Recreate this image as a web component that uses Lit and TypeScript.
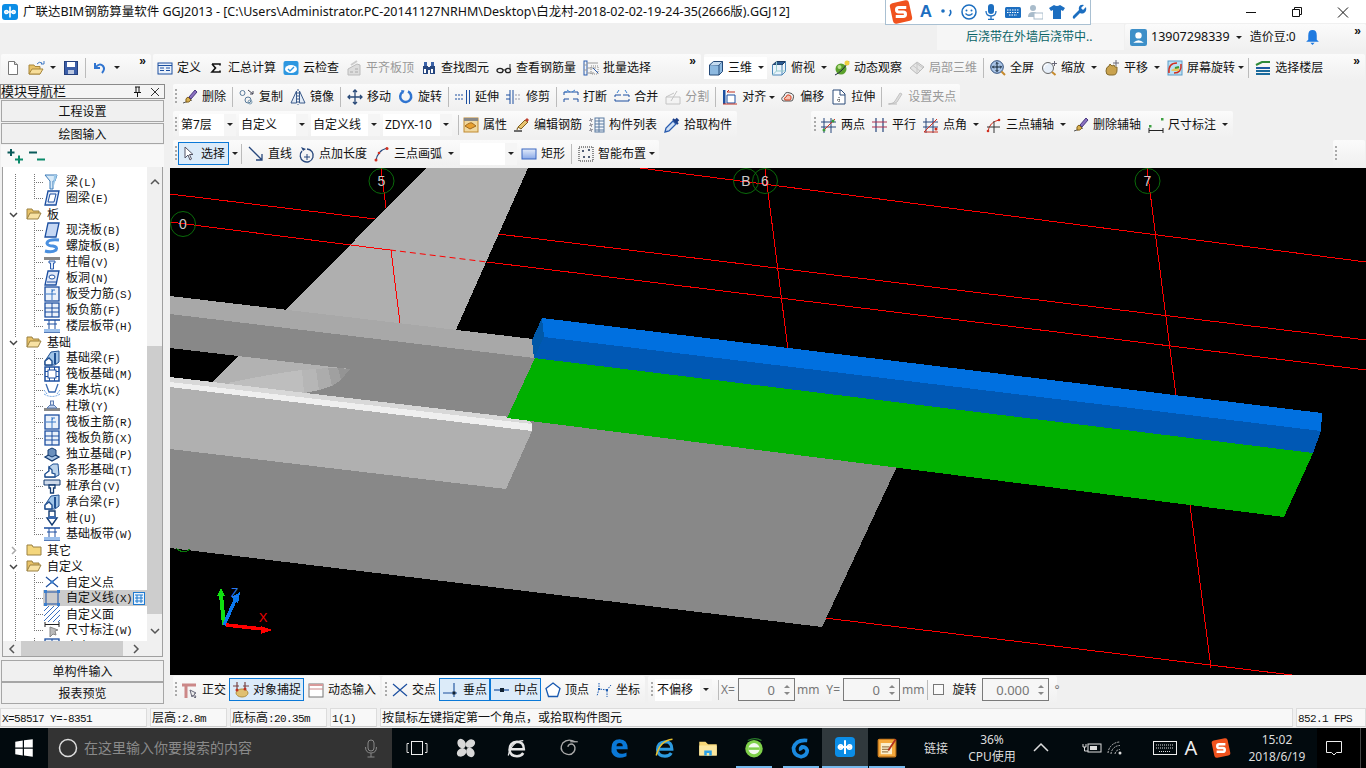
import { LitElement, html, css, svg, TemplateResult } from 'lit';
import { customElement } from 'lit/decorators.js';

const navy = '#1c4fa0';

// 16x16 icons, only roughly hand drawn from the screenshot
const ICONS: Record<string, TemplateResult> = {
  logo: svg`<rect width="16" height="16" rx="3" fill="#0b8de6"/><path d="M8 2.5v11M2.5 8h11" stroke="#fff" stroke-width="1.6"/><circle cx="4.4" cy="8" r="1.7" fill="none" stroke="#fff" stroke-width="1.3"/><circle cx="11.6" cy="8" r="1.7" fill="none" stroke="#fff" stroke-width="1.3"/>`,
  new: svg`<path d="M3.5 1.5h6l3 3v10h-9z" fill="#fff" stroke="#777"/><path d="M9.5 1.5v3h3" fill="#ddd" stroke="#777"/>`,
  open: svg`<path d="M1 14V5h5l1 1.500h5V14z" fill="#e8c268" stroke="#a8873c"/><path d="M1 14l3-5h11l-3 5z" fill="#f7de9a" stroke="#a8873c"/><path d="M9 4q2-3 5-1l-1 1h3v-3" fill="none" stroke="#3f78c4"/>`,
  save: svg`<rect x="1.500" y="1.500" width="13" height="13" fill="#3b5ea8" stroke="#243f7c"/><rect x="4" y="2" width="8" height="5" fill="#fff"/><rect x="5" y="10" width="6" height="4" fill="#bcc8e0"/>`,
  undo: svg`<path d="M3 3v5h5M3.500 7.500q4-5 7.500-1.500q2.500 3-1 7" fill="none" stroke="#2f74d0" stroke-width="2"/>`,
  def: svg`<rect x="1" y="3" width="14" height="11" fill="#eaf1fa" stroke="${navy}"/><path d="M1 5.500h14M3 8h4M3 10.500h4M9 8h4M9 10.500h4" stroke="${navy}"/>`,
  sigma: svg`<path d="M4 4h8v1.500M12 10.500V12H4l3.500-4L4 4" fill="none" stroke="#111" stroke-width="1.600"/>`,
  cloud: svg`<rect x=".5" y="1" width="15" height="14" rx="2" fill="#2d97e0"/><ellipse cx="8" cy="9" rx="6" ry="4" fill="#fff"/><path d="M5 9l2 2 4-4" fill="none" stroke="#2d97e0" stroke-width="1.400"/>`,
  flat: svg`<path d="M2 9l9-5 3 1v10H2z" fill="#ddd" stroke="#bbb"/><path d="M4 12h3M9 9h3M9 12h3" stroke="#aaa"/><path d="M5 5l6-4" stroke="#ccc" stroke-width="2"/>`,
  binoc: svg`<rect x="2" y="6" width="5" height="8" fill="#26467f"/><rect x="9" y="6" width="5" height="8" fill="#26467f"/><rect x="3" y="2" width="3" height="4" fill="#3b62a8"/><rect x="10" y="2" width="3" height="4" fill="#3b62a8"/><rect x="6" y="7" width="4" height="3" fill="#26467f"/><rect x="3" y="9" width="2" height="4" fill="#fff"/><rect x="10" y="9" width="2" height="4" fill="#fff"/>`,
  glass: svg`<ellipse cx="4" cy="10.500" rx="3" ry="2.200" fill="none" stroke="#222" stroke-width="1.300"/><ellipse cx="12" cy="10.500" rx="2.500" ry="2.200" fill="none" stroke="#222" stroke-width="1.300"/><path d="M7 10h2M14 9V4" stroke="#222"/>`,
  batch: svg`<rect x="1" y="1" width="3" height="14" fill="none" stroke="#2a5cae"/><path d="M1 5h3M1 10h3M4 3h11M4 8h9M4 13h7" stroke="#999"/><rect x="8" y="6" width="7" height="8" fill="none" stroke="#888" stroke-dasharray="1 1"/><path d="M10 8l5 5" stroke="#2a5cae"/>`,
  cube: svg`<path d="M1.500 5l4-3.500h9v10l-3.500 3.500h-9.500z" fill="#8db9e0" stroke="#254a78"/><path d="M1.500 5h9.500v10M11 5l3.500-3.500" fill="none" stroke="#254a78"/><path d="M2 5.500l3.500-3.500h8.500l-3.500 3z" fill="#c6dcf0"/>`,
  top: svg`<path d="M1.500 5l4-3.500h9l-3.500 3.500z" fill="#2d5a90" stroke="#1d3a60"/><path d="M1.500 5v10h9.500V5M11 15l3.500-3.500v-10" fill="#eaf4fc" stroke="#4c86b8"/><path d="M1.500 15l4-4h9M5.500 1.500V11" fill="none" stroke="#9cc"/>`,
  orbit: svg`<circle cx="7" cy="9" r="5.500" fill="#5aa02c"/><circle cx="5.500" cy="7" r="2" fill="#b8e08c"/><path d="M1 15Q8 12 15 1" stroke="#224" fill="none"/><circle cx="13" cy="3" r="2.500" fill="#f0d040"/>`,
  local: svg`<path d="M1 8l7-6 7 5-7 7z" fill="#e4e4e4" stroke="#bbb"/><path d="M4 5.500l7 5.500M7 3l7 5M8 2v12" stroke="#c8c8c8"/>`,
  full: svg`<circle cx="7" cy="7" r="6.300" fill="#a9c4e6" stroke="#2a4a78"/><path d="M7 2.500v9M2.500 7h9M5.700 3.800L7 2.500l1.300 1.300M5.700 10.200L7 11.500l1.300-1.300M3.800 5.700L2.500 7l1.300 1.300M10.200 5.700L11.500 7l-1.300 1.300" fill="none" stroke="#123" /><path d="M11.500 11.500l3.500 3.500" stroke="#c68a2c" stroke-width="2"/>`,
  zoom: svg`<circle cx="7" cy="8" r="5.500" fill="#e6eef8" stroke="#666"/><path d="M3 8a4 4 0 0 1 4-4" stroke="#fff" fill="none"/><path d="M11 12l3.500 3" stroke="#c68a2c" stroke-width="2"/><path d="M13.500 1v5M11 3.500h5" stroke="#667"/>`,
  pan: svg`<path d="M2 11q0-4 3-5l1-2 2 2 2-1 1 2 2 0 0 3q0 5-4 5H5q-3 0-3-4z" fill="#c9a24e" stroke="#846a2c"/><path d="M12 0v6M9 3h6" stroke="#667"/>`,
  spin: svg`<rect x="1" y="1" width="14" height="14" fill="#b9e0f4" stroke="#5a9cc8"/><path d="M2 13q-1-10 8-10" fill="none" stroke="#d03020" stroke-width="1.500"/><path d="M14 4q1 9-7 9" fill="none" stroke="#d03020" stroke-width="1.500"/><path d="M4 10l4-2 4-1v4H5z" fill="#e8c860"/><path d="M8 8l4-1" stroke="#3a9a3a" stroke-width="2"/>`,
  floors: svg`<path d="M1 5l6-3h8" fill="none" stroke="#2f8a3a" stroke-width="2"/><path d="M1 8h14" stroke="#1c5aa0" stroke-width="2"/><path d="M1 11h14M1 14h14" stroke="#1a6a9c" stroke-width="2"/>`,
  brush: svg`<path d="M1 14l9-3" stroke="#555"/><path d="M4 13q-1-4 2-5l3 3q-2 3-5 2z" fill="#d8b050" stroke="#806020"/><path d="M7 8l6-7 2 2-6 7z" fill="#8a70c0" stroke="#4a3a80"/>`,
  copy: svg`<circle cx="3.500" cy="4" r="2.500" fill="none" stroke="#5a7a9a"/><circle cx="9" cy="11" r="3" fill="none" stroke="#5a7a9a"/><circle cx="11" cy="13" r="2" fill="none" stroke="#7a9ab0"/><path d="M9 1l5 4M14 2v3h-3" fill="none" stroke="#445"/>`,
  mirror: svg`<path d="M6.500 2v12H1zM9.500 2v12H15z" fill="#e4ecf6" stroke="#3a5a8a"/><path d="M8 0v16" stroke="#3a5a8a" stroke-dasharray="2 1"/>`,
  move: svg`<path d="M8 1v14M1 8h14M6 3l2-2 2 2M6 13l2 2 2-2M3 6L1 8l2 2M13 6l2 2-2 2" fill="none" stroke="#2a4a78" stroke-width="1.300"/>`,
  rot: svg`<path d="M10 2.500a5.500 5.500 0 1 1-5.500.5" fill="none" stroke="#2f74d0" stroke-width="2.500"/><path d="M3 1l3.500.5L5 5z" fill="#2f74d0"/>`,
  ext: svg`<path d="M11.500 1v14M14.500 1v14" stroke="${navy}"/><path d="M0 6h9M0 10h9" stroke="${navy}" stroke-dasharray="2 1"/>`,
  trim: svg`<path d="M7 1v14M4 1v14" stroke="${navy}"/><path d="M0 6h4M0 10h4" stroke="${navy}"/><path d="M9 6h6M9 10h6" stroke="#99a" stroke-dasharray="2 1"/>`,
  brk: svg`<path d="M1 6V3h14v3M1 13v-3h5M10 10h5v3" fill="none" stroke="${navy}"/><path d="M7 3l-3 -2M9 3l3-2M4 3h-2" stroke="#3a80d0"/>`,
  merge: svg`<path d="M1 6h6M9 6h6M1 12h14M1 6v2M15 6v2M1 10v2M15 10v2" fill="none" stroke="${navy}"/><path d="M3 4l2-3M13 4l-2-3" stroke="#3a80d0"/>`,
  split: svg`<path d="M1 8h14v7H1zM1 8l8-4M12 2l-6 10" fill="none" stroke="#c4c4c4"/>`,
  align: svg`<rect x="1" y="1" width="2.500" height="14" fill="${navy}"/><path d="M5 6h8v8H5z" fill="#fff" stroke="${navy}"/><path d="M5 3h8M5 3l2-2" stroke="#c03020"/><path d="M1 15h14" stroke="#c03020"/>`,
  offset: svg`<path d="M3 12q-3-3 1-5q1-5 6-3q5 1 3 6q0 2-2 2z" fill="#f0f0f0" stroke="#555"/><path d="M5 11q-2-2 1-3q1-3 3-2q3 1 2 3q0 2-1 2z" fill="#f6c0b0" stroke="#d04020"/>`,
  stretch: svg`<path d="M2 1h8l4 4v10H2z" fill="#fff" stroke="#2a4a78"/><path d="M9 1v5h5" fill="none" stroke="#2a4a78"/><path d="M8 8v6M6 11h4" stroke="#333" stroke-dasharray="1 1"/>`,
  grip: svg`<path d="M1 15l4-1 2-2 5-8 2 1-5 8-2 1z" fill="#ddd" stroke="#c4c4c4"/><path d="M0 15h9" stroke="#bbb"/>`,
  attr: svg`<rect x="1" y="1" width="14" height="14" fill="#f0d8a0" stroke="#c08a30"/><rect x="1" y="1" width="14" height="3" fill="#888"/><path d="M2 9q5-4 7-3l4 3-6 3z" fill="#e8a030" stroke="#a06a20"/>`,
  edit: svg`<path d="M0 14h8" stroke="#222" stroke-width="1.300"/><path d="M3 13q0-3 2-3M4 10l7-7 3 2-7 7z" fill="#e8c470" stroke="#806020"/><path d="M11 3l2-2 2 2-2 2z" fill="#c04030"/>`,
  list: svg`<path d="M1 2h2v2H1zM1 7h2v2H1zM1 12h2v2H1z" fill="none" stroke="#445" stroke-dasharray="1 1"/><rect x="6" y="1" width="9" height="14" fill="#f4f6fa" stroke="#5a7aa0"/><path d="M6 4h9M6 7h9M6 10h9M6 13h9M10 1v14" stroke="#5a7aa0"/>`,
  pick: svg`<path d="M1 15l1-4 7-7 3 3-7 7z" fill="#cfe0f6" stroke="#2a5cae" stroke-width="1.300"/><path d="M9 2l5 5" stroke="#1c3f88" stroke-width="2"/><path d="M11 5l3-3" stroke="#1c3f88" stroke-width="3.500"/>`,
  two: svg`<path d="M3 1v15M10 1v15M0 5h15M0 10h15" stroke="#27477c"/><path d="M2 14L14 2" stroke="#d03020"/><circle cx="3" cy="13" r="1.500" fill="#3a9a3a"/><circle cx="12" cy="4" r="1.500" fill="#3a9a3a"/>`,
  para: svg`<path d="M4 1v14M11 1v14" stroke="#27477c" stroke-width="1.200"/><path d="M0 5h15M0 10h15" stroke="#b03050" stroke-width="1.200"/>`,
  ang: svg`<path d="M3 1v15M10 1v15M0 5h15M0 10h15" stroke="#27477c"/><path d="M1 15L14 2M1 15h14" stroke="#d03020"/><circle cx="13" cy="12" r="1.500" fill="#d03020"/>`,
  arc3: svg`<path d="M2 15Q3 5 13 3" fill="none" stroke="#d03020"/><path d="M8 4v12M1 10h13" stroke="#333"/><circle cx="13" cy="3" r="1.300" fill="#d03020"/><circle cx="2" cy="14" r="1.300" fill="#d03020"/>`,
  dim: svg`<path d="M1 11v5M15 11v5M1 13.500h14" stroke="#222"/><rect x="1" y="8" width="2.500" height="2.500" fill="#3ca040"/><rect x="13" y="1" width="2.500" height="2.500" fill="#3ca040"/>`,
  cursor: svg`<path d="M4 1v11l3-3 2 5 1.500-1-2-4.500h3.500z" fill="#fff" stroke="#556"/>`,
  line: svg`<path d="M1 1l13 13M14 8v6H8" fill="none" stroke="#27477c" stroke-width="1.300"/>`,
  ptlen: svg`<path d="M3 5a6.500 6.500 0 1 0 5-2" fill="none" stroke="#27477c" stroke-width="1.300"/><path d="M8 8v6M5 11h6" stroke="#27477c"/><path d="M2 1l2 4 3-2z" fill="#27477c"/>`,
  arc: svg`<path d="M2 15Q3 5 13 2" fill="none" stroke="#27477c" stroke-width="1.300"/><circle cx="13" cy="2.500" r="1.500" fill="#d03020"/><circle cx="2" cy="14" r="1.500" fill="#d03020"/><circle cx="5" cy="7" r="1.300" fill="#d03020"/>`,
  rect: svg`<rect x="1" y="3" width="14" height="10" fill="url(#rg)" stroke="#3a66c0"/><defs><linearGradient id="rg" x1="0" y1="0" x2="0" y2="1"><stop offset="0" stop-color="#e4ecfa"/><stop offset="1" stop-color="#88a8e8"/></linearGradient></defs>`,
  smart: svg`<rect x="1" y="1" width="14" height="14" fill="#f4f4f4" stroke="#222" stroke-dasharray="1 1"/><path d="M4 5h2M5 4v2M10 4h2M11 3v2M5 11h2M6 10v2M10 11h2M11 10v2" stroke="#1a2a4a"/>`,
  ortho: svg`<path d="M0 3h14M4 3v13" stroke="#c88" stroke-width="3"/><path d="M8 8l6 3-2 1 2 3-1 1-2-3-1 2z" fill="#eee" stroke="#667"/>`,
  snap: svg`<path d="M4 0v7M12 0v7M0 4h6M10 4h6" stroke="#744" stroke-width="1.200"/><ellipse cx="9" cy="11" rx="6" ry="4" fill="#e0c070" stroke="#b09040"/><circle cx="4" cy="8" r="1.500" fill="#c03020"/><circle cx="12" cy="7" r="1.500" fill="#c03020"/>`,
  dyn: svg`<rect x="1" y="2" width="14" height="13" fill="#fff" stroke="#777"/><rect x="1" y="2" width="14" height="2" fill="#d89a9a"/><path d="M1 7h14" stroke="#c88"/>`,
  cross: svg`<path d="M1 2l14 12M15 2L1 14" stroke="${navy}" stroke-width="1.200"/>`,
  perp: svg`<path d="M0 11h14M11 1v14" stroke="#1a4f9c" stroke-width="1.100"/><rect x="9.500" y="9.500" width="3" height="3" fill="#123"/>`,
  mid: svg`<path d="M0 8h15" stroke="#1a4f9c" stroke-width="1.200"/><rect x="6" y="6" width="4" height="4" fill="#123"/>`,
  vert: svg`<path d="M8 1l7 5.500-2.500 8h-9L1 6.500z" fill="#fff" stroke="#1a5ab0" stroke-width="1.300"/>`,
  coord: svg`<path d="M3 1v6l8 1v7M3 7l-2 7M11 8l4-5" fill="none" stroke="#1a5ab0" stroke-dasharray="1.500 1"/><rect x="2" y="6" width="2" height="2" fill="#1a5ab0"/><rect x="10" y="7" width="2" height="2" fill="#1a5ab0"/>`,
  // tree
  beam: svg`<path d="M1 1h12l-2 6H9v8H6V7L1 1z" fill="#d8eaf8" stroke="#3a7ab8"/><path d="M10 1l3 0-4 14" fill="#9cc8e8"/>`,
  ring: svg`<path d="M4 1h11l-3 14H1z" fill="#dfe8f8" stroke="${navy}" stroke-width="1.300"/><path d="M6 4h6l-2 8H4z" fill="#fff" stroke="${navy}"/>`,
  slab: svg`<path d="M4 1h11l-3 14H1z" fill="#c6d8f4" stroke="${navy}" stroke-width="1.300"/>`,
  spiral: svg`<path d="M15 2Q3 1 3 5.500Q4 8 9 8Q14 9 12 12Q8 15 1 13" fill="none" stroke="#4a90e0" stroke-width="3"/>`,
  capi: svg`<rect x="0" y="3" width="16" height="3" fill="#888"/><path d="M5 7h6v2H9.500v6h-3V9H5z" fill="#dfeaf8" stroke="#2a5cae"/>`,
  holei: svg`<path d="M4 1h11l-3 14H1z" fill="#dfe8f8" stroke="${navy}" stroke-width="1.300"/><ellipse cx="8" cy="7" rx="3" ry="2" fill="#fff" stroke="${navy}"/><path d="M3 12h9" stroke="${navy}"/>`,
  rebar: svg`<rect x="1" y="1" width="14" height="14" fill="#eaf1fa" stroke="${navy}" stroke-width="1.300"/><path d="M8 3v11M2 8h10M11 4q-3-1-3 2" fill="none" stroke="#3a7ac8"/>`,
  rneg: svg`<rect x="1" y="1" width="14" height="14" fill="#eaf1fa" stroke="${navy}" stroke-width="1.300"/><path d="M8 1v14M1 6h14M1 10h14" stroke="${navy}"/>`,
  band: svg`<path d="M0 14h16M0 2h16" stroke="${navy}" stroke-width="1.300"/><path d="M5 2v12M11 2v12M3 6h10" stroke="${navy}"/><rect x="0" y="11" width="16" height="3" fill="#9cc0ec"/>`,
  fbeam: svg`<path d="M1 15V11l6-9 8-1v11l-4 3z" fill="#a0c4e8" stroke="#1f4f90"/><path d="M1 15V11l4-3 3 3v4z" fill="#fff" stroke="#1f4f90" stroke-width="1.400"/><path d="M11 3v11" stroke="#1f4f90" stroke-width="2"/>`,
  raft: svg`<rect x="1" y="1" width="14" height="14" fill="#fff" stroke="${navy}" stroke-width="1.500"/><rect x="4" y="4" width="8" height="8" fill="#fff" stroke="${navy}"/><path d="M1 5.500h3M1 10.500h3M12 5.500h3M12 10.500h3M5.500 1v3M10.500 1v3M5.500 12v3M10.500 12v3" stroke="${navy}"/>`,
  pit: svg`<path d="M2 2l3 8h6l3-8" fill="none" stroke="#3a6ab0" stroke-width="1.300"/><path d="M0 12q8 5 16 0" fill="none" stroke="#6aa0e0" stroke-dasharray="2 1"/><path d="M0 8l3 4M16 8l-3 4" stroke="#6aa0e0" stroke-dasharray="2 1"/>`,
  pier: svg`<rect x="0" y="10" width="16" height="3" fill="#888"/><path d="M3 10l3-3h4l3 3z" fill="#c8d8f0" stroke="#5a7ab0"/><rect x="6.500" y="3" width="3" height="4" fill="#e0e8f4" stroke="#5a7ab0"/>`,
  iso: svg`<path d="M1 11l7-4 7 4-7 4z" fill="#a8c4e4" stroke="#123a70" stroke-width="1.300"/><path d="M4 9V4l4-2 4 2v5l-4 2z" fill="#6a8fbc" stroke="#123a70"/>`,
  strip: svg`<path d="M1 15v-3l4-3V5l4-3h5l1 11-4 2z" fill="#bcd4ec" stroke="#1f4f90"/><path d="M1 15v-3l4-3V5l3 3v3l3 1v3z" fill="#fff" stroke="#1f4f90" stroke-width="1.300"/>`,
  pcap: svg`<path d="M0 2h16v5H0z" fill="#cfdaea" stroke="#123a70"/><path d="M5 7h6v3H9.500v5h-3v-5H5z" fill="#fff" stroke="#123a70" stroke-width="1.300"/>`,
  pile: svg`<path d="M5 1h6v7h2l-5 7-5-7h2z" fill="#fff" stroke="#123a70" stroke-width="1.400"/><rect x="4" y="6" width="8" height="3" fill="#3a6ab0"/>`,
  cpt: svg`<path d="M2 3l12 10M14 3L2 13" stroke="${navy}" stroke-width="1.200"/><rect x="6.500" y="6.500" width="3" height="3" fill="#3a80d0"/>`,
  cline: svg`<rect x="2" y="2" width="12" height="12" fill="none" stroke="${navy}"/><rect x="0" y="0" width="3" height="3" fill="#3a80d0"/><rect x="13" y="0" width="3" height="3" fill="#3a80d0"/><rect x="0" y="13" width="3" height="3" fill="#3a80d0"/><rect x="13" y="13" width="3" height="3" fill="#3a80d0"/>`,
  cface: svg`<path d="M0 5L5 0M0 10L10 0M0 15L15 0M4 16L16 4M9 16l7-7M14 16l2-2" stroke="#3a70c0"/>`,
  cdim: svg`<path d="M1 0v5M15 0v5M1 2.500h14" stroke="#222"/><path d="M6 5v10l3-3 3 1-1-4 3-1z" fill="#bbb" stroke="#888"/>`,
  // taskbar
  fan: svg`<g fill="#d8d8d8"><ellipse cx="4.500" cy="4.500" rx="4" ry="3.200" transform="rotate(60 4.500 4.500)"/><ellipse cx="11.500" cy="4.500" rx="4" ry="3.200" transform="rotate(-30 11.500 4.500)"/><ellipse cx="4.500" cy="11.500" rx="4" ry="3.200" transform="rotate(-30 4.500 11.500)"/><ellipse cx="11.500" cy="11.500" rx="4" ry="3.200" transform="rotate(60 11.500 11.500)"/></g>`,
  iew: svg`<path d="M2 9h11.500q0-6-5.500-6q-6 .500-6 6.500q.500 5 6 5q3.500 0 5-2.500" fill="none" stroke="#e6e6e6" stroke-width="2"/><path d="M13 2q-9 0-12 12" fill="none" stroke="#e6e6e6"/>`,
  swirl: svg`<path d="M13 3q-6-3-10 1-3 5 1 8 5 3 8-1 2-4-1-6-3-1-4 2" fill="none" stroke="#aaa" stroke-width="1.100"/><path d="M15 3H9" stroke="#aaa"/>`,
  edge: svg`<path d="M2 8q0-7 6.500-7t6.500 8H6q.5 4 5 3.500q2-.5 3-1v3q-8 3-11-1.500q-1.500-2-1-4.500zM6 6.500h5q0-2.500-2.500-2.500T6 6.500z" fill="#0a78d7" fill-rule="evenodd"/>`,
  ie: svg`<path d="M2 9h11.500q0-6-5.500-6q-6 .500-6 6.500q.500 5 6 5q3.500 0 5-2.500" fill="none" stroke="#2d9be0" stroke-width="2.500"/><path d="M14 1q-10 1-13 13" fill="none" stroke="#e8c030" stroke-width="1.200"/>`,
  folder: svg`<path d="M1 3h5l2 2h7v9H1z" fill="#f6d676"/><rect x="1" y="6" width="14" height="8" fill="#fbe7a0"/><rect x="5" y="10" width="6" height="4" fill="#2aa0e8"/><rect x="7" y="12" width="2" height="2" fill="#fbe7a0"/>`,
  green: svg`<circle cx="8" cy="8.500" r="7" fill="#7fd04a"/><circle cx="8" cy="8.500" r="4.500" fill="#f4faf0"/><path d="M3.500 8.500h9" stroke="#7fd04a" stroke-width="2"/><path d="M3 2q6-3 11 0" fill="none" stroke="#2a7a2a"/>`,
  gg: svg`<path d="M13 2Q4 1 2 8q0 6 6 7 5-1 5-5-1-3-4-3-2 1-1 3" fill="none" stroke="#1a8ae0" stroke-width="3"/>`,
  note: svg`<rect x="1" y="1" width="14" height="14" rx="1" fill="#f4a93c" stroke="#d08020"/><rect x="3" y="4" width="9" height="9" fill="#fbeecb"/><path d="M4 7h6M4 9h6M4 11h5" stroke="#a08050"/><path d="M9 10L15 1" stroke="#b03020" stroke-width="1.500"/>`,
  sg: svg`<rect x="1.500" y="1" width="13" height="14" rx="2" transform="rotate(-12 8 8)" fill="#f0521e"/><path d="M11.500 5H6.500q-1.500 0-1.500 1.500t1.500 1.500h3q1.500 0 1.500 1.500T9.500 11H4.500" fill="none" stroke="#fff" stroke-width="2"/>`,
};

const ico = (n: string) => html`<svg class="i" viewBox="0 0 16 16">${ICONS[n]}</svg>`;

type Tool = string | [string, string, string?];

const TOP_A: Tool[] = [['new', ''], ['open', '', 'c'], ['save', ''], '|', ['undo', '', 'c']];
const TOP_B: Tool[] = [
  ['def', '定义'], ['sigma', '汇总计算'], ['cloud', '云检查'], ['flat', '平齐板顶', 'd'],
  ['binoc', '查找图元'], ['glass', '查看钢筋量'], ['batch', '批量选择'],
];
const TOP_C: Tool[] = [
  ['cube', '三维', 'cw'], ['top', '俯视', 'c'], ['orbit', '动态观察'], ['local', '局部三维', 'd'], '|',
  ['full', '全屏'], ['zoom', '缩放', 'c'], ['pan', '平移', 'c'], ['spin', '屏幕旋转', 'n'], '|', ['floors', '选择楼层'],
];
const EDIT: Tool[] = [
  ['brush', '删除'], '|', ['copy', '复制'], ['mirror', '镜像'], '|', ['move', '移动'], ['rot', '旋转'], '|',
  ['ext', '延伸'], ['trim', '修剪'], '|', ['brk', '打断'], ['merge', '合并'], ['split', '分割', 'd'], '|',
  ['align', '对齐', 'n'], ['offset', '偏移'], ['stretch', '拉伸'], '|', ['grip', '设置夹点', 'd'],
];
const PROPS: Tool[] = [['attr', '属性'], ['edit', '编辑钢筋'], ['list', '构件列表'], ['pick', '拾取构件']];
const AXES: Tool[] = [
  ['two', '两点'], ['para', '平行'], ['ang', '点角', 'c'], ['arc3', '三点辅轴', 'c'],
  ['brush', '删除辅轴'], ['dim', '尺寸标注', 'c'],
];
const DRAW: Tool[] = [['line', '直线'], ['ptlen', '点加长度'], ['arc', '三点画弧', 'c']];
const SNAP: Tool[] = [['ortho', '正交'], ['snap', '对象捕捉', 'h'], ['dyn', '动态输入']];
const POINTS: Tool[] = [['cross', '交点'], ['perp', '垂点', 'h'], ['mid', '中点', 'h'], ['vert', '顶点'], ['coord', '坐标']];

// [label, icon], a row without an icon is a folder: o = open, x = closed
const TREE: [string, string, string?][] = [
  ['梁(L)', 'beam'], ['圈梁(E)', 'ring', 'last'],
  ['板', 'o'], ['现浇板(B)', 'slab'], ['螺旋板(B)', 'spiral'], ['柱帽(V)', 'capi'], ['板洞(N)', 'holei'],
  ['板受力筋(S)', 'rebar'], ['板负筋(F)', 'rneg'], ['楼层板带(H)', 'band', 'last'],
  ['基础', 'o'], ['基础梁(F)', 'fbeam'], ['筏板基础(M)', 'raft'], ['集水坑(K)', 'pit'], ['柱墩(Y)', 'pier'],
  ['筏板主筋(R)', 'rebar'], ['筏板负筋(X)', 'rneg'], ['独立基础(P)', 'iso'], ['条形基础(T)', 'strip'],
  ['桩承台(V)', 'pcap'], ['承台梁(F)', 'fbeam'], ['桩(U)', 'pile'], ['基础板带(W)', 'band', 'last'],
  ['其它', 'x'], ['自定义', 'o'],
  ['自定义点', 'cpt'], ['自定义线(X)', 'cline', 'sel'], ['自定义面', 'cface'], ['尺寸标注(W)', 'cdim', 'last'],
];

const FOLDER_OPEN = svg`<path d="M1 13V3h5l1 2h6v3" fill="#e8c268" stroke="#9a8040"/><path d="M1 13l3-6h11l-3 6z" fill="#f8e2a4" stroke="#9a8040"/>`;
const FOLDER_SHUT = svg`<path d="M1 13V3h5l1 2h8v8z" fill="#f4d67c" stroke="#9a8040"/>`;

@customElement('app-root')
export class AppRoot extends LitElement {
  static styles = css`
    :host {
      display: block;
      position: relative;
      width: 1366px;
      height: 768px;
      overflow: hidden;
      background: #f0f0f0;
      color: #111;
      font: 12px/16px "Noto Sans", "Noto Sans CJK SC", sans-serif;
    }
    .i { width: 16px; height: 16px; flex: none; display: block; overflow: visible; }
    .titlebar { height: 23px; background: #fff; display: flex; align-items: center; padding-left: 2px; font-size: 12.5px; }
    .titlebar .i { margin-right: 5px; }
    .winbtns { margin-left: auto; display: flex; }
    .winbtns svg { width: 46px; height: 20px; }
    .band { height: 31px; display: flex; padding-top: 1px; box-sizing: border-box; }
    .notice {
      margin-left: 937px; width: 187px; height: 26px; background: #f6f6f6;
      color: #0a6468; display: flex; align-items: center; padding-left: 29px; box-sizing: border-box;
    }
    .sec {
      display: flex; align-items: center; height: 27px; box-sizing: border-box; flex: none;
      background: linear-gradient(#fbfbfb, #f4f4f4 60%, #f0f0f0); border-radius: 2px;
    }
    .account { width: 241px; margin-left: 1px; height: 26px; padding-left: 5px; }
    .account .i { width: 17px; height: 17px; margin-right: 4px; }
    .account .phone { font-size: 12.5px; }
    .account .gold { margin-left: 8px; }
    .account .i.bell { margin: 0 0 0 8px; }
    .toprow { display: flex; height: 27px; margin-bottom: 3px; }
    .t-a { width: 150px; margin-left: 1px; }
    .t-b { width: 548px; margin-left: 2px; }
    .t-c { width: 661px; margin-left: 3px; }
    .more { margin-left: auto; margin-right: 5px; align-self: flex-start; font: bold 12px/14px "Liberation Sans", sans-serif; }
    .it { display: flex; align-items: center; height: 22px; padding: 0 3px 0 4px; flex: none; white-space: nowrap; box-sizing: border-box; }
    .it .i { margin-right: 4px; }
    .it.bare .i { margin-right: 0; }
    .it.dim { color: #999; }
    .it.w { background: #fff; }
    .it.h { background: #dcebf9; outline: 1px solid #0a78d7; outline-offset: -1px; height: 23px; }
    .it.sel { padding-left: 3px; padding-right: 4px; }
    .c { width: 0; height: 0; border: 3px solid transparent; border-top: 3.5px solid #222; border-bottom: 0; margin-left: 6px; }
    .c.near { margin-left: 3px; }
    .it .c.near { margin-right: -2px; }
    .sp { width: 1px; height: 20px; background: #bbb; margin: 0 2px 0 3px; flex: none; }
    .sp.tight { margin-right: 0; }
    .grip {
      width: 2px; height: 16px; margin: 0 1px 0 2px; flex: none;
      background: repeating-linear-gradient(#aaa 0 2px, transparent 2px 4px);
    }
    .combo {
      height: 22px; background: #fff; display: flex; align-items: center; box-sizing: border-box;
      padding-left: 2px; margin-right: 3px; flex: none; white-space: nowrap;
    }
    .combo span { flex: 1; }
    .combo b { width: 12px; align-self: stretch; background: #f5f5f5; display: flex; align-items: center; justify-content: center; }
    .combo b .c { margin: 0; }
    .c1 { width: 57px; margin-left: 1px; }
    .c2 { width: 69px; }
    .c3 { width: 69px; }
    .c4 { width: 57px; margin-left: 3px; margin-right: 0; }
    .blk { color: #111; }
    .work { display: flex; height: 620px; }
    .side { width: 165px; flex: none; display: flex; flex-direction: column; }
    .navhead {
      height: 15px; border: 1px solid #8a8a8a; box-sizing: border-box; display: flex; align-items: center;
      line-height: 13px; margin-bottom: 1px; font-size: 13px; background: #f4f4f4;
    }
    .navhead svg { width: 12px; height: 12px; flex: none; }
    .navhead svg:first-of-type { margin-left: auto; margin-right: 6px; }
    .navhead svg:last-of-type { margin-right: 3px; }
    .sbtn {
      height: 22px; border: 1px solid #a6a6a6; box-sizing: border-box; margin: 0 1px; text-align: center;
      line-height: 22px; background: #f0f0f0;
    }
    .sbtn.second { margin-top: 1px; height: 21px; }
    .side .tools { height: 24px; margin: 1px 1px 0; display: flex; align-items: center; padding: 2px 6px 0; box-sizing: border-box; background: #f8f8f8; }
    .side .tools .i + .i { margin-left: 6px; }
    .treebox {
      height: 490px; margin: 0 2px 3px; border: 1px solid #a0a0a0; border-top: 0;
      background: #f0f0f0; display: grid; grid-template: 474px 15px / 144px 15px; box-sizing: border-box;
    }
    .tree { grid-area: 1 / 1; background: #fff; padding-top: 7px; overflow: hidden; }
    .row { height: 16px; display: flex; align-items: center; position: relative; white-space: nowrap; box-sizing: border-box; }
    .row.child {
      padding-left: 41px;
      background:
        repeating-linear-gradient(90deg, #777 0 1px, transparent 1px 2px) 31px 8px / 10px 1px no-repeat,
        repeating-linear-gradient(#777 0 1px, transparent 1px 2px) 31px 0 / 1px 16px no-repeat,
        repeating-linear-gradient(#777 0 1px, transparent 1px 2px) 12px 0 / 1px 16px no-repeat;
    }
    .row.child.last {
      background:
        repeating-linear-gradient(90deg, #777 0 1px, transparent 1px 2px) 31px 8px / 10px 1px no-repeat,
        repeating-linear-gradient(#777 0 1px, transparent 1px 2px) 31px 0 / 1px 8px no-repeat,
        repeating-linear-gradient(#777 0 1px, transparent 1px 2px) 12px 0 / 1px 16px no-repeat;
    }
    .row.child .i { margin-right: 6px; }
    .row.sel::before { content: ""; position: absolute; left: 40px; right: 0; top: 0; bottom: 0; background: #ccc; }
    .row.sel > * { position: relative; }
    .row.sel .tag { width: 12px; height: 13px; margin-left: 1px; flex: none; }
    .row.folder {
      padding-left: 6px;
      background: repeating-linear-gradient(#777 0 1px, transparent 1px 2px) 12px 0 / 1px 16px no-repeat;
    }
    .row.folder .chev { width: 9px; height: 9px; margin-right: 8px; flex: none; background: #fff; }
    .row.folder .i { margin-right: 5px; }
    .k { font: 11px/16px "Liberation Mono", monospace; letter-spacing: -.6px; }
    .lab { font-family: "Noto Sans CJK SC", sans-serif; }
    .vs { grid-area: 1 / 2 / 3 / 3; display: flex; flex-direction: column; align-items: center; background: #f0f0f0; }
    .vs svg, .hs svg { width: 10px; height: 10px; flex: none; }
    .vs .u { margin: 10px 0 0; }
    .vs .thumb { width: 15px; height: 268px; background: #cdcdcd; margin-top: 159px; flex: none; }
    .vs .d { margin-top: 12px; }
    .hs { grid-area: 2 / 1; display: flex; align-items: center; background: #f0f0f0; padding-left: 4px; }
    .hs .thumb { width: 102px; height: 15px; background: #cdcdcd; margin: 0 8px 0 4px; flex: none; }
    .main { flex: 1; margin-left: 5px; display: flex; flex-direction: column; min-width: 0; }
    .r { display: flex; flex: none; }
    .r2 { height: 26px; margin-bottom: 1px; }
    .r3 { height: 27px; margin-bottom: 2px; }
    .r4 { height: 27px; margin-bottom: 1px; }
    .r .sec { height: 100%; }
    .s-edit { width: 787px; margin-left: 3px; }
    .s-prop { width: 564px; margin-left: 3px; }
    .s-axis { width: 422px; margin-left: 74px; }
    .s-axis .grip, .s-pts .grip { margin-left: 3px; }
    .s-draw { width: 486px; margin-left: 3px; }
    .s-tail { width: 32px; margin-left: auto; margin-right: 1px; }
    .view { height: 507px; flex: none; background: #000; display: block; width: 1196px; }
    .view text { font-family: "Liberation Sans", sans-serif; }
    .bot { height: 29px; display: flex; align-items: center; }
    .bot .sec { height: 28px; }
    .s-snap { width: 207px; margin-left: 3px; }
    .s-pts { width: 263px; margin-left: 2px; }
    .s-off { width: 409px; margin-left: 3px; color: #777; white-space: nowrap; }
    .s-off .grip { margin-left: 3px; }
    .num {
      height: 23px; border: 1px solid #7a7a7a; box-sizing: border-box; display: flex; align-items: center; justify-content: flex-end;
      color: #777; font-size: 13px; background: #f6f6f6; margin: 0 2px 0 3px; flex: none;
    }
    .n1 { width: 57px; }
    .n2 { width: 67px; margin-left: 6px; }
    .f.y { margin-left: 7px; }
    .chk { width: 11px; height: 11px; flex: none; margin-left: 3px; }
    .rotl { color: #111; margin-left: 8px; flex: none; }
    .deg { margin-left: 3px; }
    .spinb { width: 14px; height: 100%; display: flex; flex-direction: column; justify-content: center; align-items: center; gap: 4px; margin-left: 5px; }
    .spinb i { width: 0; height: 0; border: 3px solid transparent; border-bottom: 3px solid #888; border-top: 0; }
    .spinb i + i { border-top: 3px solid #888; border-bottom: 0; }
    .status { height: 24px; padding-top: 4px; box-sizing: border-box; display: flex; gap: 3px; }
    .cell {
      height: 19px; background: #f8f8f8; border: 1px solid #dcdcdc; border-bottom-color: #ccc; box-sizing: border-box; padding-left: 1px;
      white-space: nowrap; overflow: hidden; line-height: 17px; flex: none;
    }
    .w1 { width: 147px; }
    .w2 { width: 77px; }
    .w3 { width: 97px; }
    .w4 { width: 47px; }
    .w5 { width: 913px; }
    .w6 { width: 70px; }
    .taskbar {
      height: 40px; background: #020a0e; color: #ddd; display: grid; align-items: center; justify-items: center;
      grid-template-columns: 48px 344px 49px 50px 52px 51px 49px 44px 42px 50px 43px 46px 38px 60px 52px 46px 39px 24px 50px 28px 32px 80px 33px 16px;
    }
    .tk { height: 40px; width: 100%; display: flex; align-items: center; justify-content: center; box-sizing: border-box; }
    .tk .i { width: 20px; height: 20px; }
    .tk .kb { width: 24px; height: 14px; flex: none; }
    .tk.on { background: linear-gradient(#76b9ed, #76b9ed) 50% 100% / 36px 2px no-repeat; }
    .tk.now { background: #30393d; border-bottom: 2px solid #76b9ed; }
    .tk.blk { background: #000; }
    .search {
      width: 100%; height: 40px; background: #333; display: flex; align-items: center; padding-left: 10px;
      box-sizing: border-box; color: #8a8a8a; font-size: 14px;
    }
    .search svg { flex: none; }
    .search .ring { width: 20px; height: 20px; margin-right: 6px; }
    .search .mic { width: 14px; height: 20px; margin-left: 112px; }
    .stack { text-align: center; line-height: 17px; white-space: nowrap; }
    .abc { font: 20px/20px "Noto Sans", sans-serif; color: #eee; }
    .end { justify-content: flex-end; }
    .rest { background: #000; width: 100%; height: 40px; display: flex; justify-content: flex-end; }
    .rest::after { content: ""; width: 1px; height: 40px; background: #444; margin-right: 5px; }
    .sogou {
      position: absolute; left: 885px; top: 0; width: 206px; height: 25px; background: #fff; border: 1px solid #a9c0d2; border-top: 0;
      box-sizing: border-box; display: flex; align-items: center;
    }
    .sogou svg { width: 16px; height: 16px; flex: none; margin-left: 6px; }
    .sogou svg.lg { width: 24px; height: 24px; margin-left: 3px; margin-right: 3px; }
    .sogou .a { color: #1c6ec0; font: bold 17px/20px "Liberation Sans", sans-serif; width: 18px; margin-left: 1px; margin-right: -2px; text-align: center; }
    .green { position: absolute; left: 1010px; top: 0; width: 44px; height: 3px; background: #4cc85a; }
  `;

  private tools(list: Tool[]) {
    return list.map(t => {
      if (t === '|') return html`<div class="sp"></div>`;
      const [icon, label, fl = ''] = t as [string, string, string?];
      const cls = `it${fl.includes('d') ? ' dim' : ''}${fl.includes('w') ? ' w' : ''}${fl.includes('h') ? ' h' : ''}${label ? '' : ' bare'}`;
      return html`<div class=${cls}>${ico(icon)}${label}${fl.includes('c') ? html`<i class="c"></i>` : ''}${fl.includes('n') ? html`<i class="c near"></i>` : ''}</div>`;
    });
  }

  private combo(text: string, cls: string) {
    return html`<div class="combo ${cls}"><span>${text}</span><b><i class="c"></i></b></div>`;
  }

  private label(text: string) {
    // the bracketed shortcut is set in a narrow monospace, as SimSun does
    const m = text.match(/^(.*?)(\(.\))$/);
    if (!m) return html`<span class="lab">${text}</span>`;
    return html`<span class="lab">${m[1]}<span class="k">${m[2]}</span></span>`;
  }

  private tree() {
    return TREE.map(([text, kind, fl]) => {
      if (kind === 'o' || kind === 'x') {
        return html`<div class="row folder">
          <svg class="chev" viewBox="0 0 9 9"><path d=${kind === 'o' ? 'M1 3l3.500 3.500L8 3' : 'M3 1l3.500 3.500L3 8'} fill="none" stroke=${kind === 'o' ? '#444' : '#aaa'} stroke-width="1.500"/></svg>
          <svg class="i" viewBox="0 0 16 16">${kind === 'o' ? FOLDER_OPEN : FOLDER_SHUT}</svg>${this.label(text)}
        </div>`;
      }
      return html`<div class="row child ${fl ?? ''}">${ico(kind)}${this.label(text)}
        ${fl === 'sel' ? html`<svg class="tag" viewBox="0 0 12 13"><rect x=".5" y=".5" width="11" height="12" fill="#eaf4fe" stroke="#1f7ad0"/><path d="M4 3v8M8 3v8M2 3h8M2 6h8M2 9h8" stroke="#1f7ad0"/></svg>` : ''}
      </div>`;
    });
  }

  private scene() {
    return svg`
      <g shape-rendering="crispEdges">
        <g stroke="#f00" fill="none">
          <path d="M498 234L1366 340"/>
          <path d="M487 262L1366 370"/>
          <path d="M640 168L1366 262"/>
          <path d="M825 618L1292 675"/>
          <path d="M765 168L788 350"/>
          <path d="M1147 168L1176 396M1190 505L1211 668"/>
        </g>
        <path d="M426 168H528L455 332L286 312L214 384H170V352L286 310z" fill="#afafaf"/>
        <path d="M170 194L375 219M170 222L390 250M381 168L386 208" stroke="#f00" fill="none"/>
        <path d="M391 250L400 323" stroke="#f00" fill="none"/>
        <path d="M170 314L534 358L900 460L822 627L170 548z" fill="#888"/>
        <path d="M170 296L533 339L534 358L170 314z" fill="#a8a8a8"/>
        <path d="M170 348L238 356L213 382L170 377z" fill="#000"/>
        <path d="M238 356L350 369Q335 390 297 393L200 395L213 382z" fill="#b2b2b2"/>
        <path d="M228 383Q270 374 302 370L304 393L250 395z" fill="#bebebe"/>
        <path d="M302 370L316 369L319 390L304 393z" fill="#b6b6b6"/>
        <path d="M316 369L328 368L332 386L319 390z" fill="#acacac"/>
        <path d="M328 368L338 368L341 380L332 386z" fill="#a0a0a0"/>
        <path d="M338 368L350 369L341 380z" fill="#949494"/>
        <path d="M170 377L527 419L532 424L170 382z" fill="#d8d8d8"/>
        <path d="M170 382L532 424V431L170 387z" fill="#efefef"/>
        <path d="M170 387L532 431L506 489L170 449z" fill="#b0b0b0"/>
        <path d="M507 418L535 358L1313 453L1284 517z" fill="#00b000"/>
        <path d="M542 318L532 340L534 358L544 337z" fill="#0058a8"/>
        <path d="M544 337L534 358L1313 453L1321 431z" fill="#0058b4"/>
        <path d="M542 318L1322 413L1321 431L544 337z" fill="#0070e0"/>
        <path d="M176 548Q183 555 190 549" stroke="#0a7a0a" fill="none"/>
      </g>
      <path d="M390 250L487 262" stroke="#f00" stroke-dasharray="6 4" fill="none"/>
      <g fill="none" stroke="#0a6a0a">
        <circle cx="183" cy="224" r="12.500"/>
        <circle cx="381.500" cy="181" r="12.500"/>
        <circle cx="746" cy="181" r="12.500"/>
        <circle cx="765" cy="181" r="12.500"/>
        <circle cx="1147.500" cy="181" r="12.500"/>
      </g>
      <g fill="#c8c8c8" font-size="14" text-anchor="middle">
        <text x="183" y="229">0</text>
        <text x="381.500" y="186">5</text>
        <text x="746" y="186">B</text>
        <text x="765" y="186">6</text>
        <text x="1147.500" y="186">7</text>
      </g>
      <g shape-rendering="crispEdges">
        <path d="M224 625L221 595" stroke="#10e010" stroke-width="4"/>
        <path d="M221 588L217 596H225z" fill="#10e010"/>
        <path d="M224 625L236 598" stroke="#0a78f0" stroke-width="3.500"/>
        <path d="M240 592L232 597L238 604z" fill="#0a78f0"/>
        <path d="M226 625L263 629" stroke="#f00" stroke-width="3.500"/>
        <path d="M272 630L261 626V634z" fill="#f00"/>
      </g>
      <text x="231" y="597" font-size="12" fill="#2a7af0">Z</text>
      <text x="263" y="622" font-size="13" fill="#e00" text-anchor="middle">X</text>
    `;
  }

  render() {
    const caret = (cls = '') => html`<i class="c ${cls}"></i>`;
    const spin = (v: string, cls: string) => html`<div class="num ${cls}">${v}<div class="spinb"><i></i><i></i></div></div>`;
    return html`
      <div class="titlebar">
        ${ico('logo')}<span>广联达BIM钢筋算量软件 GGJ2013 - [C:\\Users\\Administrator.PC-20141127NRHM\\Desktop\\白龙村-2018-02-02-19-24-35(2666版).GGJ12]</span>
        <div class="winbtns">
          <svg viewBox="0 0 46 20"><path d="M18 10.500h10" stroke="#111"/></svg>
          <svg viewBox="0 0 46 20"><path d="M18.500 7.500h7v7h-7zM20.500 7.500v-2h7v7h-2" fill="none" stroke="#111"/></svg>
          <svg viewBox="0 0 46 20"><path d="M18 5.500l10 10M28 5.500l-10 10" fill="none" stroke="#111"/></svg>
        </div>
      </div>
      <div class="band">
        <div class="notice">后浇带在外墙后浇带中..</div>
        <div class="sec account">
          <svg class="i" viewBox="0 0 16 16"><rect width="16" height="16" rx="2" fill="#3d8fc8"/><circle cx="8" cy="6" r="3" fill="#fff"/><path d="M3 13q5-5 10 0z" fill="#fff"/></svg>
          <span class="phone">13907298339</span>${caret()}
          <span class="gold">造价豆:0</span>
          <svg class="i bell" viewBox="0 0 16 16"><path d="M8 1q-4 0-4 5v4l-2 2h12l-2-2V6q0-5-4-5z" fill="#1f7ae0"/><path d="M6 13h4l-2 2z" fill="#1f7ae0"/></svg>
          <span class="more">»</span>
        </div>
      </div>
      <div class="toprow">
        <div class="sec t-a">${this.tools(TOP_A)}<span class="more">»</span></div>
        <div class="sec t-b">${this.tools(TOP_B)}<span class="more">»</span></div>
        <div class="sec t-c">${this.tools(TOP_C)}<span class="more">»</span></div>
      </div>
      <div class="work">
        <div class="side">
          <div class="navhead">模块导航栏
            <svg viewBox="0 0 12 12"><path d="M4 1h5M5 1v5M8 1v5M3 6.500h7M6.500 7v4" stroke="#111" fill="none"/></svg>
            <svg viewBox="0 0 12 12"><path d="M2 2l8 8M10 2l-8 8" stroke="#333"/></svg>
          </div>
          <div class="sbtn">工程设置</div>
          <div class="sbtn second">绘图输入</div>
          <div class="tools">
            <svg class="i" viewBox="0 0 16 16"><path d="M4 0v7M.5 3.500h7" stroke="#0a5a5a" stroke-width="2"/><path d="M12 6.500v8M8 10.500h8" stroke="#0a8a6a" stroke-width="2"/></svg>
            <svg class="i" viewBox="0 0 16 16"><path d="M0 3.500h8" stroke="#0a5a5a" stroke-width="2"/><path d="M8 10.500h8" stroke="#0a8a6a" stroke-width="2"/></svg>
          </div>
          <div class="treebox">
            <div class="tree">${this.tree()}
              <div class="row child">${ico('rneg')}<span class="lab">土方</span></div>
            </div>
            <div class="vs">
              <svg class="u" viewBox="0 0 10 10"><path d="M1 7l4-4 4 4" fill="none" stroke="#555" stroke-width="1.500"/></svg>
              <div class="thumb"></div>
              <svg class="d" viewBox="0 0 10 10"><path d="M1 3l4 4 4-4" fill="none" stroke="#555" stroke-width="1.500"/></svg>
            </div>
            <div class="hs">
              <svg viewBox="0 0 10 10"><path d="M7 1L3 5l4 4" fill="none" stroke="#555" stroke-width="1.500"/></svg>
              <div class="thumb"></div>
              <svg viewBox="0 0 10 10"><path d="M3 1l4 4-4 4" fill="none" stroke="#555" stroke-width="1.500"/></svg>
            </div>
          </div>
          <div class="sbtn">单构件输入</div>
          <div class="sbtn">报表预览</div>
        </div>
        <div class="main">
          <div class="r r2"><div class="sec s-edit"><div class="grip"></div>${this.tools(EDIT)}</div></div>
          <div class="r r3">
            <div class="sec s-prop">
              <div class="grip"></div>
              ${this.combo('第7层', 'c1')}${this.combo('自定义', 'c2')}${this.combo('自定义线', 'c3')}${this.combo('ZDYX-10', 'c3')}
              <div class="sp tight"></div>${this.tools(PROPS)}
            </div>
            <div class="sec s-axis"><div class="grip"></div>${this.tools(AXES)}</div>
          </div>
          <div class="r r4">
            <div class="sec s-draw">
              <div class="grip"></div>
              <div class="it h sel">${ico('cursor')}选择</div>${caret('near')}<div class="sp"></div>
              ${this.tools(DRAW)}${this.combo('', 'c4')}
              ${this.tools([['rect', '矩形'], '|', ['smart', '智能布置', 'n']])}
            </div>
            <div class="sec s-tail"><div class="grip"></div></div>
          </div>
          <svg class="view" viewBox="170 168 1196 507">${this.scene()}</svg>
          <div class="bot">
            <div class="sec s-snap"><div class="grip"></div>${this.tools(SNAP)}</div>
            <div class="sec s-pts"><div class="grip"></div>${this.tools(POINTS)}</div>
            <div class="sec s-off">
              <div class="grip"></div>
              ${this.combo('不偏移', 'c1 blk')}
              <div class="sp"></div>
              <span class="f">X=</span>${spin('0', 'n1')}<span>mm</span>
              <span class="f y">Y=</span>${spin('0', 'n1')}<span>mm</span>
              <div class="sp"></div>
              <svg class="chk" viewBox="0 0 11 11"><rect x=".5" y=".5" width="10" height="10" fill="#fafafa" stroke="#777"/></svg>
              <span class="rotl">旋转</span>${spin('0.000', 'n2')}<span class="deg">°</span>
            </div>
          </div>
        </div>
      </div>
      <div class="status">
        <div class="cell w1"><span class="k">X=58517 Y=-8351</span></div>
        <div class="cell w2">层高<span class="k">:2.8m</span></div>
        <div class="cell w3">底标高<span class="k">:20.35m</span></div>
        <div class="cell w4"><span class="k">1(1)</span></div>
        <div class="cell w5">按鼠标左键指定第一个角点，或拾取构件图元</div>
        <div class="cell w6"><span class="k">852.1 FPS</span></div>
      </div>
      <div class="taskbar">
        <div class="tk"><svg class="i" viewBox="0 0 16 16"><path d="M1 3l6-1v5.500H1zM8 1.800L15 1v6.500H8zM1 8.500h6V14l-6-1zM8 8.500h7V15l-7-1z" fill="#fff"/></svg></div>
        <div class="search">
          <svg class="ring" viewBox="0 0 20 20"><circle cx="10" cy="10" r="8.500" fill="none" stroke="#ddd" stroke-width="1.500"/></svg>
          在这里输入你要搜索的内容
          <svg class="mic" viewBox="0 0 14 20"><rect x="4" y="2" width="6" height="11" rx="3" fill="none" stroke="#888"/><path d="M1.500 9q0 6 5.500 6t5.500-6M7 15v4M3.500 19h7" fill="none" stroke="#888"/></svg>
        </div>
        <div class="tk"><svg class="i" viewBox="0 0 20 20"><path d="M2 5H0v9h2M18 5h2v9h-2" fill="none" stroke="#ddd" transform="translate(0 .5)"/><rect x="4.500" y="3.500" width="11" height="13" fill="none" stroke="#eee"/></svg></div>
        <div class="tk">${ico('fan')}</div>
        <div class="tk">${ico('iew')}</div>
        <div class="tk">${ico('swirl')}</div>
        <div class="tk">${ico('edge')}</div>
        <div class="tk">${ico('ie')}</div>
        <div class="tk">${ico('folder')}</div>
        <div class="tk on">${ico('green')}</div>
        <div class="tk on">${ico('gg')}</div>
        <div class="tk on now">${ico('logo')}</div>
        <div class="tk on">${ico('note')}</div>
        <div class="stack">链接</div>
        <div class="stack">36%<br />CPU使用</div>
        <div class="tk"><svg class="i" viewBox="0 0 20 20"><path d="M3 13l7-7 7 7" fill="none" stroke="#ddd" stroke-width="1.500"/></svg></div>
        <div class="tk end"><svg class="i" viewBox="0 0 20 20"><rect x="5" y="6" width="13" height="8" fill="none" stroke="#ddd"/><rect x="7" y="8" width="7" height="4" fill="#ddd"/><path d="M0 6v3h3V6M1.500 9v4H5" fill="none" stroke="#ddd"/></svg></div>
        <div class="tk"><svg class="i" viewBox="0 0 20 20"><path d="M3 15a12 12 0 0 1 12-11M6 16a9 9 0 0 1 9-8.500M10 16a5 5 0 0 1 5-4.500" fill="none" stroke="#bbb" stroke-dasharray="2 1"/><circle cx="15" cy="15" r="1.500" fill="#ddd"/></svg></div>
        <div class="tk end"><svg class="kb" viewBox="0 0 24 14"><rect x=".5" y=".5" width="23" height="13" fill="none" stroke="#eee"/><path d="M3 4h18M3 7h18M6 10.500h12" stroke="#ddd" stroke-dasharray="1 1"/></svg></div>
        <div class="stack abc">A</div>
        <div class="tk">${ico('sg')}</div>
        <div class="stack">15:02<br />2018/6/19</div>
        <div class="tk blk"><svg class="i" viewBox="0 0 20 20"><path d="M2.500 3.500h15v11h-5l-2.500 2.500-2.500-2.500h-5z" fill="none" stroke="#eee"/></svg></div>
        <div class="rest"></div>
      </div>
      <div class="green"></div>
      <div class="sogou">
        <svg class="lg" viewBox="0 0 16 16">${ICONS.sg}</svg>
        <span class="a">A</span>
        <svg viewBox="0 0 16 16"><circle cx="4" cy="7" r="1.800" fill="#1c6ec0"/><path d="M11 6q2 3-1 6" stroke="#1c6ec0" fill="none" stroke-width="1.600"/></svg>
        <svg viewBox="0 0 16 16"><circle cx="8" cy="8" r="7" fill="none" stroke="#1c6ec0" stroke-width="1.500"/><circle cx="5.500" cy="6.500" r="1" fill="#1c6ec0"/><circle cx="10.500" cy="6.500" r="1" fill="#1c6ec0"/><path d="M4.500 9.500q3.500 3.500 7 0" fill="none" stroke="#1c6ec0" stroke-width="1.300"/></svg>
        <svg viewBox="0 0 16 16"><rect x="5" y="0" width="6" height="10" rx="3" fill="#1c6ec0"/><path d="M3 7q0 5 5 5t5-5M8 12v3M5 15.500h6" fill="none" stroke="#1c6ec0" stroke-width="1.300"/></svg>
        <svg viewBox="0 0 16 16"><rect x="0" y="3" width="16" height="11" rx="1.500" fill="#1c6ec0"/><path d="M2 6h12M2 8.500h12M4 11h8" stroke="#fff" stroke-dasharray="1.500 1"/></svg>
        <svg viewBox="0 0 16 16"><circle cx="6" cy="4" r="3" fill="#a9bccb"/><path d="M1 13q0-5 5-5t5 5z" fill="#a9bccb"/><rect x="7" y="9" width="9" height="6" fill="#fff" stroke="#a9bccb"/></svg>
        <svg viewBox="0 0 16 16"><path d="M5 1L0 4l2 3 2-1v9h8V6l2 1 2-3-5-3q-3 2-6 0z" fill="#1c6ec0"/></svg>
        <svg viewBox="0 0 16 16"><path d="M15 3l-3 3-2-2 3-3q-4-1-5 2-.5 2 0 3l-6 6q-1 2 1 3l6-6q2 1 4 0 3-2 2-6z" fill="#1c6ec0"/></svg>
      </div>
    `;
  }
}
